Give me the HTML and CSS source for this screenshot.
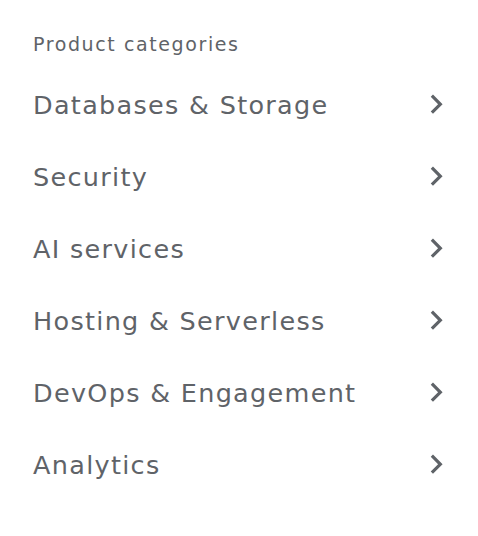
FILE: index.html
```html
<!DOCTYPE html>
<html lang="en">
<head>
<meta charset="utf-8">
<title>Product categories</title>
<link rel="stylesheet" href="styles.css">
</head>
<body>
<nav class="menu">
  <div class="menu-title">Product categories</div>
  <ul class="menu-list">
    <li class="menu-item"><span class="label">Databases &amp; Storage</span><svg class="chev" viewBox="0 0 24 24"><path d="M10 6L8.59 7.41 13.17 12l-4.58 4.59L10 18l6-6z"/></svg></li>
    <li class="menu-item"><span class="label">Security</span><svg class="chev" viewBox="0 0 24 24"><path d="M10 6L8.59 7.41 13.17 12l-4.58 4.59L10 18l6-6z"/></svg></li>
    <li class="menu-item"><span class="label">AI services</span><svg class="chev" viewBox="0 0 24 24"><path d="M10 6L8.59 7.41 13.17 12l-4.58 4.59L10 18l6-6z"/></svg></li>
    <li class="menu-item"><span class="label">Hosting &amp; Serverless</span><svg class="chev" viewBox="0 0 24 24"><path d="M10 6L8.59 7.41 13.17 12l-4.58 4.59L10 18l6-6z"/></svg></li>
    <li class="menu-item"><span class="label">DevOps &amp; Engagement</span><svg class="chev" viewBox="0 0 24 24"><path d="M10 6L8.59 7.41 13.17 12l-4.58 4.59L10 18l6-6z"/></svg></li>
    <li class="menu-item"><span class="label">Analytics</span><svg class="chev" viewBox="0 0 24 24"><path d="M10 6L8.59 7.41 13.17 12l-4.58 4.59L10 18l6-6z"/></svg></li>
  </ul>
</nav>
</body>
</html>
```
FILE: styles.css
```css
html, body {
  margin: 0;
  padding: 0;
  background: #ffffff;
}
body {
  font-family: "DejaVu Sans", Inter, sans-serif;
  color: #5f6368;
}
.menu {
  padding: 28px 23px 0 33px;
}
.menu-title {
  font-size: 19px;
  line-height: 32px;
  height: 32px;
  margin-bottom: 8px;
  letter-spacing: 1.6px;
}
.menu-list {
  list-style: none;
  margin: 0;
  padding: 0;
}
.menu-item {
  display: flex;
  align-items: center;
  justify-content: space-between;
  height: 72px;
}
.label {
  font-size: 25.5px;
  line-height: 32px;
  letter-spacing: 1.3px;
  padding-top: 1px;
}
.chev {
  width: 38.4px;
  height: 38.4px;
  fill: #5f6368;
  flex: none;
}
```
